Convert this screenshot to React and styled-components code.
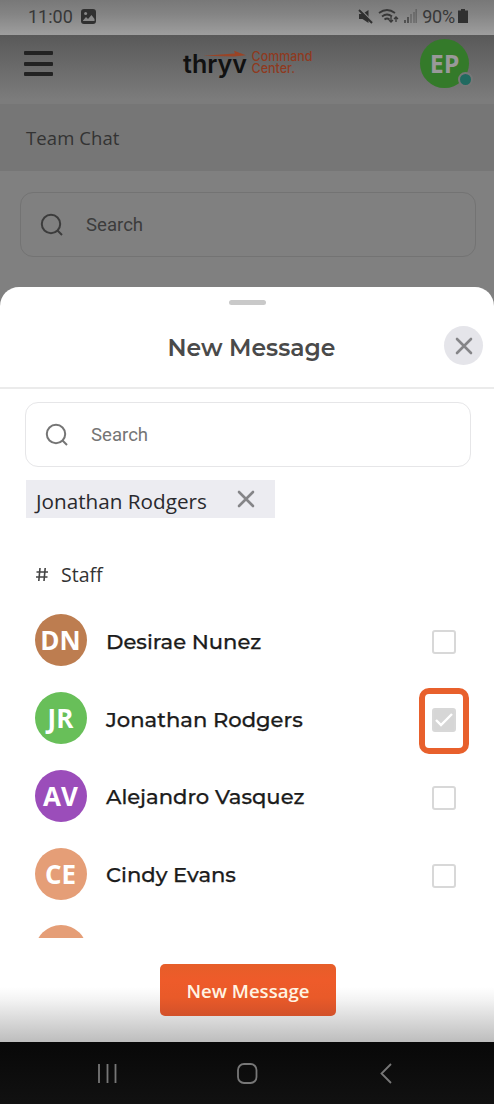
import React from "react";
import styled, { createGlobalStyle } from "styled-components";

const Global = createGlobalStyle`
  * { box-sizing: border-box; }
  body { margin: 0; background: #808080; }
`;
const Screen = styled.main`
  width: 494px; height: 1104px; overflow: hidden; background: #808080;
  display: flex; flex-direction: column; font-family: "Open Sans", sans-serif;
`;
const StatusBar = styled.div`
  height: 35px; flex: none; display: flex; align-items: center; justify-content: space-between;
  padding: 0 26px 3px 28px; background: linear-gradient(#787878, #848484 40%, #9e9e9e);
  font: 400 18px Roboto, sans-serif; color: #383838;
`;
const StatusGroup = styled.div`display: flex; align-items: center; gap: ${p => p.$gap}px;`;
const StatusText = styled.span`letter-spacing: ${p => p.$spacing}px;`;
const Header = styled.header`
  height: 70px; flex: none; display: flex; align-items: flex-start; justify-content: space-between;
  padding: 4px 25px 0 24px; background: linear-gradient(#595959, #7c7c7c 94%);
  border-bottom: 1px solid #767676;
`;
const Burger = styled.div`
  width: 29px; height: 25px; margin-top: 12px; display: flex; flex-direction: column; justify-content: space-between;
`;
const BurgerLine = styled.i`height: 4px; background: #222; border-radius: 1px;`;
const Logo = styled.svg`width: 134px; height: 34px; margin: 7px 0 0 24px;`;
const UserAvatar = styled.div`
  position: relative; width: 49px; height: 49px; border-radius: 50%; background: #347a2a; color: #999;
  font-size: 25px; font-weight: 700; line-height: 49px; text-align: center;
`;
const Presence = styled.i`
  position: absolute; right: -4px; bottom: 1px; width: 15px; height: 15px; border-radius: 50%;
  background: #206a60; border: 2px solid #777;
`;
const TitleBar = styled.div`
  height: 66px; flex: none; padding-left: 26px; background: #767676; color: #333;
  font-size: 18.5px; line-height: 66px; letter-spacing: .1px;
`;
const SearchBox = styled.div`
  height: 65px; flex: none; display: flex; align-items: center; gap: 22px; padding-left: 19px;
  margin: ${p => p.$margin}; border: 1.5px solid ${p => p.$dim ? "#737373" : "#e6e6e8"}; border-radius: 13px;
  color: ${p => p.$dim ? "#3c3c3c" : "#757575"}; font: 400 18.6px Roboto, sans-serif;
`;
const Sheet = styled.section`
  flex: none; height: 755px; margin-top: 30px; border-radius: 19px 19px 0 0; display: flex; flex-direction: column;
  background: linear-gradient(#fff 0 700px, #f3f3f3 713px, #bdbdbd 755px);
`;
const Grabber = styled.i`width: 37px; height: 5px; flex: none; border-radius: 3px; background: #c9c9c9; margin: 13px 0 0 229px;`;
const SheetHeader = styled.div`
  height: 84px; flex: none; display: grid; grid-template-columns: 50px 1fr 50px; align-items: start;
  border-bottom: 2px solid #ebebeb;
`;
const SheetTitle = styled.h1`
  grid-column: 2; margin: 28px 0 0 9px; text-align: center; color: #4a4a4a;
  font: 600 23.5px/30px Montserrat, Inter, sans-serif; white-space: nowrap;
`;
const Close = styled.div`
  width: 39px; height: 39px; margin-top: 21px; border-radius: 50%; background: #e5e5ea;
  display: flex; align-items: center; justify-content: center;
`;
const Chip = styled.div`
  width: 249px; height: 38px; flex: none; margin: 13px 0 0 26px; padding: 0 20px 0 10px; background: #ececf1;
  display: flex; align-items: center; justify-content: space-between; color: #29292e; font-size: 20.7px;
  line-height: 38px; white-space: nowrap;
`;
const ChipLabel = styled.span`padding-top: 3px;`;
const Group = styled.div`
  height: 30px; flex: none; display: flex; align-items: center; gap: 13px; margin: 41px 0 0 36px; color: #333; font-size: 19.5px;
`;
const List = styled.div`flex: none; height: 349px; padding-top: 12.6px; overflow: hidden;`;
const Row = styled.div`
  height: 77.7px; display: flex; align-items: center; padding: 0 38px 0 34.5px;
`;
const Avatar = styled.div`
  width: 52px; height: 52px; flex: none; border-radius: 50%; background: ${p => p.$color}; color: #fff;
  font-size: 26px; font-weight: 700; line-height: 53px; text-align: center;
`;
const Name = styled.div`
  flex: 1; padding: 2px 0 0 19.5px; color: #1c1c1c; font: 500 21.1px Montserrat, Inter, sans-serif;
  -webkit-text-stroke: .25px currentColor; white-space: nowrap;
`;
const Check = styled.div`
  position: relative; top: 2px; width: 24px; height: 24px; border: 2.5px solid #d8d8d8; border-radius: 3px;
  background: ${p => p.$on ? "#d6d6d6" : "#fff"}; display: flex; align-items: center; justify-content: center;
  svg { flex: none; }
`;
const Highlight = styled.i`
  position: absolute; left: -15px; top: -22px; width: 50px; height: 66px; border: 6px solid #e8602c; border-radius: 10px;
`;
const SendButton = styled.button`
  width: 176px; height: 52px; flex: none; margin: 26px 0 0 160px; padding: 1px 0 0; border: 0; border-radius: 5px;
  background: linear-gradient(#e65e29, #ee5b2a 30%, #e95a29 65%, #d2512a); color: #fff4e3;
  font: 600 18.6px "Open Sans", sans-serif;
`;
const NavBar = styled.nav`
  height: 62px; flex: none; background: linear-gradient(#080808, #111); display: flex; align-items: flex-start;
  justify-content: space-between; padding: 19px 98px 0 94px;
`;

const SearchIcon = () => (
  <svg width="24" height="24" viewBox="0 0 24 24" fill="none" stroke="currentColor" strokeWidth="2">
    <circle cx="11" cy="11" r="9.2" /><path d="M17.500 17.500 22 22" />
  </svg>
);
const Cross = ({ size }) => (
  <svg width={size} height={size} viewBox="0 0 18 18" stroke="#858588" strokeWidth="2.600" strokeLinecap="round">
    <path d="M2 2 16 16M16 2 2 16" />
  </svg>
);

const staff = [
  { initials: "DN", name: "Desirae Nunez", color: "#bd7d50" },
  { initials: "JR", name: "Jonathan Rodgers", color: "#68bf59", checked: true },
  { initials: "AV", name: "Alejandro Vasquez", color: "#9b4dba" },
  { initials: "CE", name: "Cindy Evans", color: "#e59e77" },
];

export default function App() {
  return (
    <Screen>
      <Global />
      <StatusBar>
        <StatusGroup $gap={8}>
          <StatusText $spacing={0}>11:00</StatusText>
          <svg width="15" height="15" viewBox="0 0 15 15">
            <rect width="15" height="15" rx="3" fill="#303030" />
            <circle cx="4.6" cy="4.5" r="1.5" fill="#888" />
            <path d="M2 11.5 5 8l2 2 3.5-4 3 4v2H2z" fill="#888" />
          </svg>
        </StatusGroup>
        <StatusGroup $gap={5}>
          <svg width="15" height="15" viewBox="0 0 15 15" fill="#303030">
            <path d="M1 5h3.500L10.500 1v13l-6-4H1z" /><path d="m2 0 13 13" stroke="#858585" strokeWidth="1.500" />
            <path d="m1 1 13 13" stroke="#303030" strokeWidth="1.900" />
          </svg>
          <svg width="21" height="16" viewBox="0 0 21 16" fill="none" stroke="#383838" strokeWidth="1.800">
            <path d="M1 5Q9-1 17 5M4 8.500q5-4 10 0M6.500 11.500q2.500-2 5 0" />
            <path d="M13 9v5m-2-2 2 2 2-2M18 14V9m-2 2 2-2 2 2" strokeWidth="1.300" />
          </svg>
          <svg width="13" height="14" viewBox="0 0 13 14" stroke="#444" strokeWidth="1.600">
            <path d="M1 14v-3M4 14v-6" /><path d="M7 14V5M10 14V3M12.200 14V0" opacity=".45" />
          </svg>
          <StatusGroup $gap={3}>
            <StatusText $spacing={-0.2}>90%</StatusText>
            <svg width="10" height="14" viewBox="0 0 10 14" fill="#303030"><path d="M3 0h4v1.500h3V14H0V1.500h3z" /></svg>
          </StatusGroup>
        </StatusGroup>
      </StatusBar>
      <Header>
        <Burger><BurgerLine /><BurgerLine /><BurgerLine /></Burger>
        <Logo viewBox="0 0 134 34">
          <text x="1" y="26.500" fontFamily="Inter, sans-serif" fontSize="25.500" fontWeight="600" fill="#111" textLength="64" lengthAdjust="spacingAndGlyphs">thryv</text>
          <path d="M21 9.800 53 7.600 52 4.800 64 9.300 52 10.500z" fill="#9a4426" />
          <g fill="#8f3a1f" fontFamily="Inter, sans-serif" fontSize="13" fontWeight="500">
            <text x="69.500" y="14.800" textLength="61" lengthAdjust="spacingAndGlyphs">Command</text>
            <text x="69.500" y="27" textLength="43.500" lengthAdjust="spacingAndGlyphs">Center.</text>
          </g>
        </Logo>
        <UserAvatar>EP<Presence /></UserAvatar>
      </Header>
      <TitleBar>Team Chat</TitleBar>
      <SearchBox $dim $margin="21px 18px 0 20px"><SearchIcon />Search</SearchBox>
      <Sheet>
        <Grabber />
        <SheetHeader>
          <SheetTitle>New Message</SheetTitle>
          <Close><Cross size={18} /></Close>
        </SheetHeader>
        <SearchBox $margin="13px 23px 0 25px"><SearchIcon />Search</SearchBox>
        <Chip><ChipLabel>Jonathan Rodgers</ChipLabel><Cross size={18} /></Chip>
        <Group>
          <svg width="12" height="13" viewBox="0 0 12 13" stroke="#444" strokeWidth="1.600"><path d="M4 0 2.800 13M9.200 0 8 13M.5 4h11.500M0 9h11.500" /></svg>
          <span>Staff</span>
        </Group>
        <List>
          {staff.map(person => (
            <Row key={person.initials}>
              <Avatar $color={person.color}>{person.initials}</Avatar>
              <Name>{person.name}</Name>
              <Check $on={person.checked}>
                {person.checked && <svg width="20" height="18" viewBox="0 0 20 18" fill="none" stroke="#fff" strokeWidth="2.400"><path d="m2 9 5 5L18 3" /></svg>}
                {person.checked && <Highlight />}
              </Check>
            </Row>
          ))}
          <Row><Avatar $color="#e59e77" /></Row>
        </List>
        <SendButton>New Message</SendButton>
      </Sheet>
      <NavBar>
        <svg width="26" height="24" viewBox="0 0 26 24" stroke="#777" strokeWidth="1.800"><path d="M5 3v19M13.500 3v19M21.500 3v19" /></svg>
        <svg width="24" height="24" viewBox="0 0 24 24" fill="none" stroke="#777" strokeWidth="1.800"><rect x="1" y="3" width="18.500" height="19" rx="6" /></svg>
        <svg width="18" height="24" viewBox="0 0 18 24" fill="none" stroke="#777" strokeWidth="1.800"><path d="m13 3-9.500 9.500L13 22" /></svg>
      </NavBar>
    </Screen>
  );
}
